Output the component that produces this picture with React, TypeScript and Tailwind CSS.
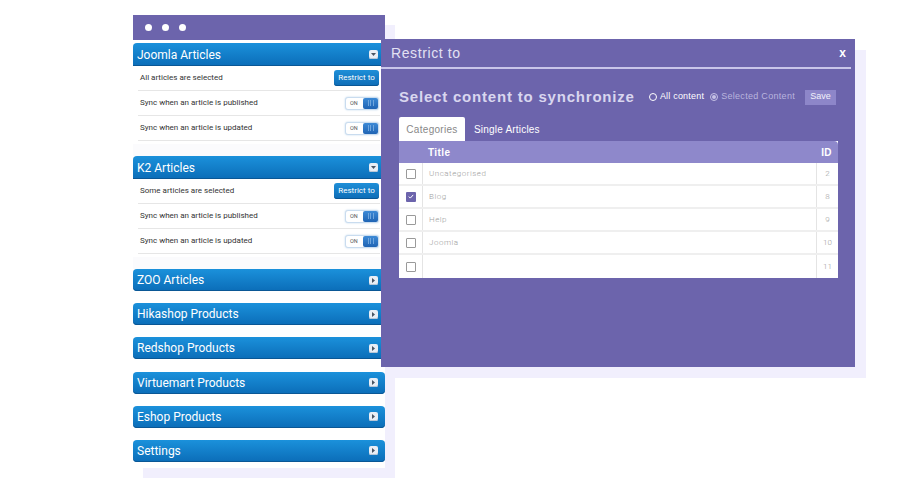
import React from 'react';

const Caret = ({ open }: { open?: boolean }) => (
  <span className="flex h-[9px] w-[9px] items-center justify-center rounded-[2px] bg-[#e9eef5] shadow-[inset_0_-1px_0_#b8c6d6]">
    {open ? (
      <svg width="5" height="3" viewBox="0 0 5 3">
        <path d="M0 0h5L2.5 3z" fill="#4a5563" />
      </svg>
    ) : (
      <svg width="3" height="5" viewBox="0 0 3 5">
        <path d="M0 0v5l3-2.5z" fill="#4a5563" />
      </svg>
    )}
  </span>
);

const SectionHeader = ({ label, open }: { label: string; open?: boolean }) => (
  <div
    className={`flex items-center justify-between bg-gradient-to-b from-[#1b91db] to-[#0b6db8] pl-[4px] pr-[7px] shadow-[inset_0_-1px_0_#0a5795] ${
      open ? 'h-[23px] rounded-t-[4px]' : 'h-[22px] rounded-[4px]'
    }`}
  >
    <span className="text-[12px] text-white">{label}</span>
    <Caret open={open} />
  </div>
);

const Toggle = () => (
  <div className="flex h-[13px] w-[34px] items-center justify-between rounded-[3px] border border-[#c9dcef] bg-white pl-[4px] shadow-[0_0_2px_#b9d3ea]">
    <span className="text-[5.5px] text-[#555]">ON</span>
    <span className="flex h-full w-[15px] items-center justify-center gap-[1.5px] rounded-[2px] bg-gradient-to-b from-[#3d8ad6] to-[#1f64b4]">
      <i className="h-[6px] w-px bg-[#6fa6de]" />
      <i className="h-[6px] w-px bg-[#6fa6de]" />
      <i className="h-[6px] w-px bg-[#6fa6de]" />
    </span>
  </div>
);

const RestrictButton = () => (
  <button className="h-[16px] w-[45px] rounded-[3px] bg-gradient-to-b from-[#1f8fd8] to-[#0d6cb6] text-[8px] text-white shadow-[inset_0_-1px_0_#0a5795]">
    Restrict to
  </button>
);

const Row = ({ label, children }: { label: string; children: React.ReactNode }) => (
  <div className="flex h-[25px] items-center justify-between border-b border-[#e6e6e6] pl-[2px] pr-[1px]">
    <span className="text-[8px] text-[#333]">{label}</span>
    {children}
  </div>
);

const ExpandedSection = ({ label, summary }: { label: string; summary: string }) => (
  <div>
    <SectionHeader label={label} open />
    <div className="px-[5px]">
      <Row label={summary}>
        <RestrictButton />
      </Row>
      <Row label="Sync when an article is published">
        <Toggle />
      </Row>
      <Row label="Sync when an article is updated">
        <Toggle />
      </Row>
    </div>
    <div className="mt-[3px] h-[12px] bg-[#fbfbfd]" />
  </div>
);

const rows = [
  { title: 'Uncategorised', id: 2, checked: false },
  { title: 'Blog', id: 8, checked: true },
  { title: 'Help', id: 9, checked: false },
  { title: 'Joomla', id: 10, checked: false },
  { title: '', id: 11, checked: false },
];

const Checkbox = ({ checked }: { checked: boolean }) =>
  checked ? (
    <span className="flex h-[10px] w-[10px] items-center justify-center rounded-[1px] bg-[#6c64ac]">
      <svg width="6" height="5" viewBox="0 0 6 5">
        <path d="M0.8 2.6l1.5 1.5L5.2 0.9" stroke="#fff" strokeWidth="1" fill="none" />
      </svg>
    </span>
  ) : (
    <span className="h-[10px] w-[10px] rounded-[1px] border border-[#9a9a9a] bg-white" />
  );

const Modal = () => (
  <div className="absolute left-[381px] top-[39px] h-[328px] w-[474px] bg-[#6c64ac] font-['Liberation_Sans',Arial,sans-serif] shadow-[11px_11px_0_0_#f1effd]">
    <div className="mr-[4px] flex h-[30px] items-center justify-between border-b-2 border-[#c9c5ea] pl-[10px] pr-[5px]">
      <span className="text-[14px] tracking-[0.6px] text-[#e3e1f3]">Restrict to</span>
      <span className="text-[12px] font-bold text-white">x</span>
    </div>
    <div className="pl-[18px] pr-[17px]">
      <div className="mt-[19px] flex h-[18px] items-center justify-between">
        <h2 className="text-[15px] font-bold tracking-[0.8px] text-[#d9d6ef]">Select content to synchronize</h2>
        <div className="mr-[2px] flex items-center">
          <label className="flex items-center gap-[3px] text-[9px] tracking-[0.2px] text-white">
            <span className="h-[8px] w-[8px] rounded-full border border-white" />
            All content
          </label>
          <label className="ml-[6px] flex items-center gap-[3px] text-[9px] tracking-[0.3px] text-[#b9b4de]">
            <span className="flex h-[8px] w-[8px] items-center justify-center rounded-full border border-[#c6c2e6]">
              <span className="h-[4px] w-[4px] rounded-full bg-[#c6c2e6]" />
            </span>
            Selected Content
          </label>
          <button className="ml-[10px] h-[15px] w-[31px] bg-[#8d86c9] text-[9px] text-[#f2f1fa]">Save</button>
        </div>
      </div>
      <div className="mt-[11px] flex h-[24px] items-stretch">
        <div className="flex w-[66px] items-center justify-center rounded-t-[2px] bg-white text-[10px] tracking-[0.3px] text-[#888]">
          Categories
        </div>
        <div className="ml-[9px] flex items-center text-[10px] tracking-[0.2px] text-white">Single Articles</div>
      </div>
      <div className="bg-white">
        <div className="flex h-[22px] items-center rounded-tr-[4px] bg-[#8e88cb] text-[10px] font-bold tracking-[0.4px] text-white">
          <span className="ml-[29px] flex-1">Title</span>
          <span className="mr-[6px]">ID</span>
        </div>
        {rows.map((r, i) => (
          <div
            key={r.id}
            className={`flex h-[23px] items-stretch font-['Roboto',Arial,sans-serif] font-light ${
              i < rows.length - 1 ? 'border-b-2 border-[#efefef]' : ''
            }`}
          >
            <div className="flex w-[24px] items-center justify-center border-r border-[#e4e4e4]">
              <Checkbox checked={r.checked} />
            </div>
            <div className="flex flex-1 items-center pl-[6px] text-[8px] tracking-[0.5px] text-[#9d9d9d]">{r.title}</div>
            <div className="flex w-[22px] items-center justify-center border-l border-[#e4e4e4] text-[8px] text-[#9d9d9d]">
              {r.id}
            </div>
          </div>
        ))}
      </div>
    </div>
  </div>
);

export default function App() {
  return (
    <div className="relative h-[500px] w-[920px] overflow-hidden bg-white font-['Roboto',Arial,sans-serif]">
      <div className="ml-[133px] mt-[15px] w-[252px] bg-white shadow-[10px_10px_0_0_#f1effd]">
        <div className="flex h-[25px] items-center gap-[10px] bg-[#6c64ac] pl-[12px]">
          <span className="h-[7px] w-[7px] rounded-full bg-white" />
          <span className="h-[7px] w-[7px] rounded-full bg-white" />
          <span className="h-[7px] w-[7px] rounded-full bg-white" />
        </div>
        <div className="flex flex-col pb-[6px] pt-[3px]">
          <ExpandedSection label="Joomla Articles" summary="All articles are selected" />
          <ExpandedSection label="K2 Articles" summary="Some articles are selected" />
          <div className="flex flex-col gap-[12.2px]">
            {['ZOO Articles', 'Hikashop Products', 'Redshop Products', 'Virtuemart Products', 'Eshop Products', 'Settings'].map(
              (l) => (
                <SectionHeader key={l} label={l} />
              )
            )}
          </div>
        </div>
      </div>
      <Modal />
    </div>
  );
}
